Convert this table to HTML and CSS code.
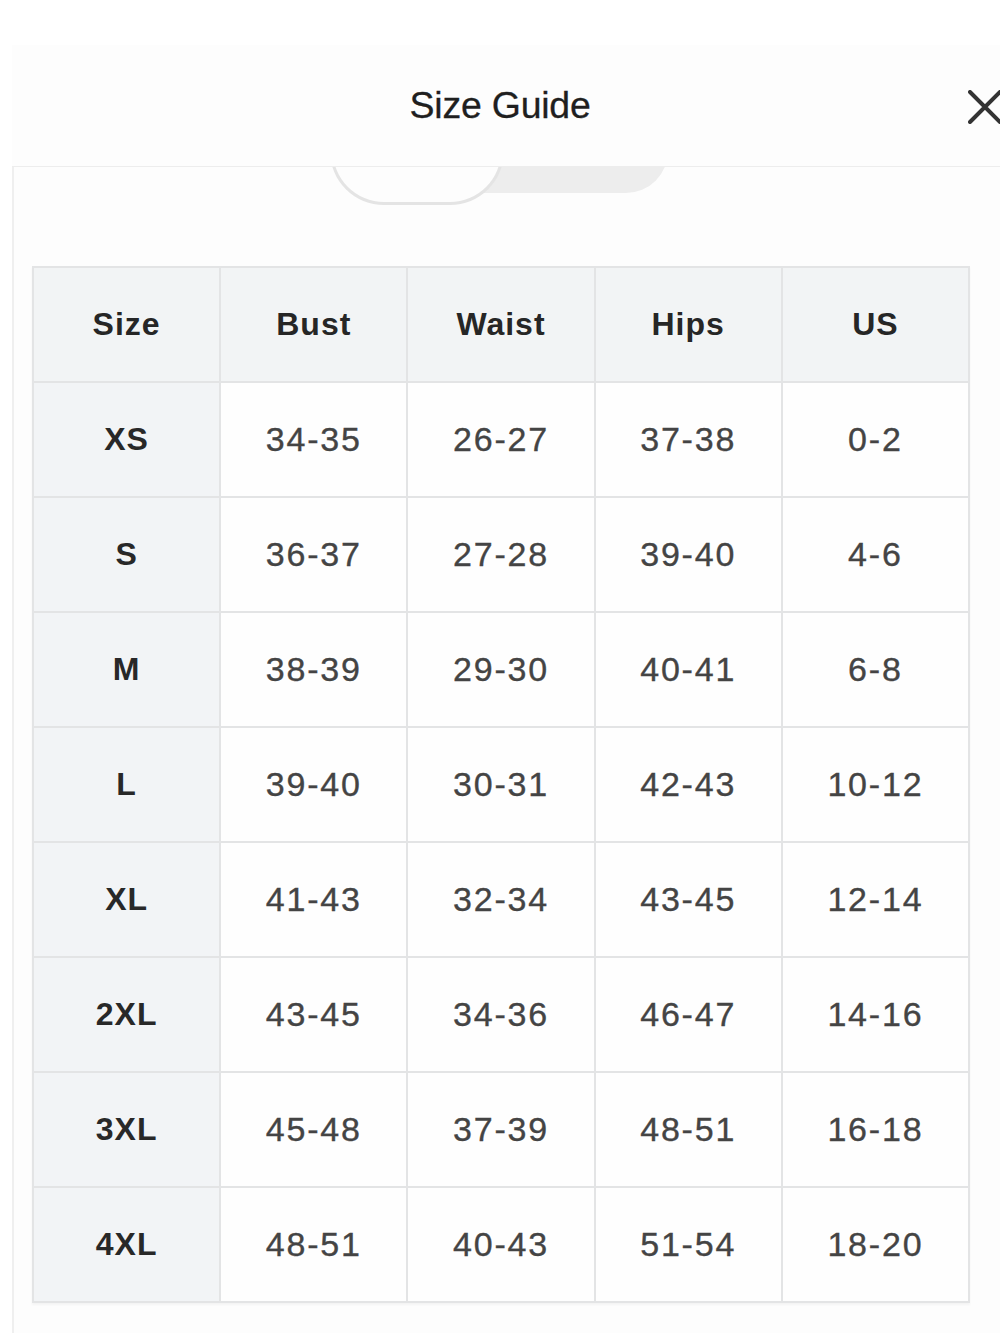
FILE: index.html
```html
<!DOCTYPE html>
<html lang="en">
<head>
<meta charset="utf-8">
<title>Size Guide</title>
<link rel="stylesheet" href="styles.css">
</head>
<body>
<div class="page">
  <section class="panel">
    <header class="panel-head">
      <h1 class="title">Size Guide</h1>
      <button class="close" aria-label="Close">
        <svg viewBox="0 0 34 34" width="34" height="34"><path d="M2 2 L32 32 M32 2 L2 32" stroke="#333" stroke-width="4" stroke-linecap="round" fill="none"/></svg>
      </button>
    </header>
    <div class="segmented">
      <div class="seg-track">
        <div class="seg-active"></div>
      </div>
    </div>
    <table class="sizes">
      <thead>
        <tr><th>Size</th><th>Bust</th><th>Waist</th><th>Hips</th><th>US</th></tr>
      </thead>
      <tbody>
        <tr><th>XS</th><td>34-35</td><td>26-27</td><td>37-38</td><td>0-2</td></tr>
        <tr><th>S</th><td>36-37</td><td>27-28</td><td>39-40</td><td>4-6</td></tr>
        <tr><th>M</th><td>38-39</td><td>29-30</td><td>40-41</td><td>6-8</td></tr>
        <tr><th>L</th><td>39-40</td><td>30-31</td><td>42-43</td><td>10-12</td></tr>
        <tr><th>XL</th><td>41-43</td><td>32-34</td><td>43-45</td><td>12-14</td></tr>
        <tr><th>2XL</th><td>43-45</td><td>34-36</td><td>46-47</td><td>14-16</td></tr>
        <tr><th>3XL</th><td>45-48</td><td>37-39</td><td>48-51</td><td>16-18</td></tr>
        <tr><th>4XL</th><td>48-51</td><td>40-43</td><td>51-54</td><td>18-20</td></tr>
      </tbody>
    </table>
  </section>
</div>
</body>
</html>
```
FILE: styles.css
```css
html, body {
  margin: 0;
  padding: 0;
  background: #ffffff;
  overflow: hidden;
}
body {
  width: 1000px;
  height: 1333px;
  font-family: "Liberation Sans", Arial, sans-serif;
}
.page {
  padding-top: 45px;
  padding-left: 12px;
}
.panel {
  width: 1000px;
  height: 1300px;
  background: #fdfdfd;
  border-left: 2px solid #efefef;
  box-sizing: border-box;
  padding: 0 0 0 18px;
  position: relative;
}
.panel-head {
  position: relative;
  z-index: 2;
  height: 121px;
  width: 936px;
  margin-left: -20px;
  padding-left: 20px;
  padding-right: 44px;
  background: #fdfdfd;
  border-bottom: 1px solid #ededed;
  display: flex;
  align-items: center;
  justify-content: center;
}
.title {
  margin: 0;
  font-size: 36px;
  font-weight: 400;
  color: #1f1f1f;
  letter-spacing: -0.2px;
  transform: scaleX(1.04);
  -webkit-text-stroke: 0.3px #1f1f1f;
}
.close {
  position: absolute;
  left: 956px;
  top: 45px;
  width: 34px;
  height: 34px;
  padding: 0;
  border: 0;
  background: transparent;
}
.close svg { display: block; }
.segmented {
  width: 936px;
  display: flex;
  justify-content: center;
  margin-top: -60px;
  height: 98px;
  position: relative;
  z-index: 1;
}
.seg-track {
  width: 335px;
  height: 86px;
  background: #ededed;
  border-radius: 0 0 42px 42px;
}
.seg-active {
  width: 168px;
  height: 95px;
  margin-left: -3px;
  background: #fdfdfd;
  border: 3px solid #e4e4e4;
  border-top: 0;
  border-radius: 0 0 54px 54px;
}
.sizes {
  margin-top: 61px;
  width: 938px;
  border-collapse: collapse;
  table-layout: fixed;
  box-shadow: 0 2px 2px rgba(0,0,0,0.04);
}
.sizes th, .sizes td {
  height: 113px;
  padding: 0;
  border: 2px solid #e3e4e5;
  text-align: center;
  vertical-align: middle;
}
.sizes thead th {
  background: #f2f4f5;
  color: #262626;
  font-size: 32px;
  font-weight: 700;
  letter-spacing: 1px;
}
.sizes tbody th {
  background: #f2f4f6;
  color: #282828;
  font-size: 32px;
  font-weight: 700;
  letter-spacing: 1px;
}
.sizes tbody td {
  background: #fefefe;
  color: #444;
  font-size: 34px;
  font-weight: 400;
  letter-spacing: 1.8px;
  -webkit-text-stroke: 0.35px #444;
}
```
